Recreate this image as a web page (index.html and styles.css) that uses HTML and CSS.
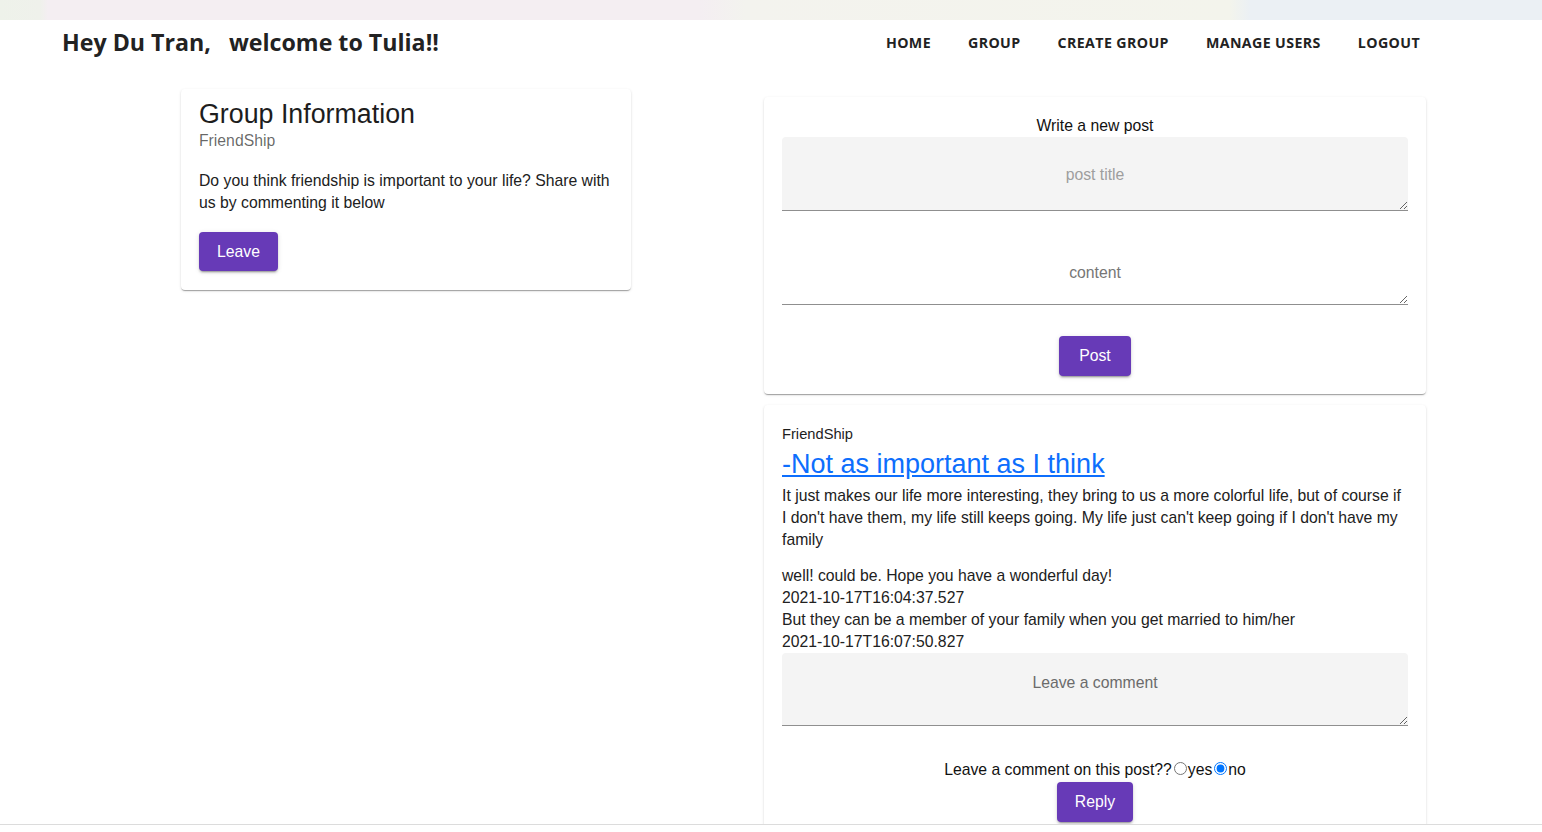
FILE: index.html
```html
<!DOCTYPE html>
<html lang="en">
<head>
<meta charset="utf-8">
<title>Tulia - Group</title>
<link rel="stylesheet" href="styles.css">
</head>
<body>
<div class="page">
  <div class="bgstrip"></div>
  <header class="topbar">
    <h1 class="greeting">Hey Du Tran,&nbsp;&nbsp; welcome to Tulia!!</h1>
    <nav class="nav">
      <a class="nav-link" href="#">HOME</a>
      <a class="nav-link" href="#">GROUP</a>
      <a class="nav-link" href="#">CREATE GROUP</a>
      <a class="nav-link" href="#">MANAGE USERS</a>
      <a class="nav-link" href="#">LOGOUT</a>
    </nav>
  </header>
  <main class="layout">
    <section class="col-left">
      <div class="card group-card">
        <h2 class="card-title">Group Information</h2>
        <div class="subtitle">FriendShip</div>
        <p class="desc">Do you think friendship is important to your life? Share with us by commenting it below</p>
        <button class="btn">Leave</button>
      </div>
    </section>
    <section class="col-right">
      <div class="card form-card">
        <div class="form-title">Write a new post</div>
        <textarea class="field filled title-field" placeholder="post title"></textarea>
        <textarea class="field standard content-field" placeholder="content"></textarea>
        <div class="center">
          <button class="btn btn-post">Post</button>
        </div>
      </div>
      <div class="card post-card">
        <div class="post-group">FriendShip</div>
        <a class="post-title" href="#">-Not as important as I think</a>
        <p class="post-body">It just makes our life more interesting, they bring to us a more colorful life, but of course if I don't have them, my life still keeps going. My life just can't keep going if I don't have my family</p>
        <div class="comments">
          <div class="comment-line">well! could be. Hope you have a wonderful day!</div>
          <div class="comment-line">2021-10-17T16:04:37.527</div>
          <div class="comment-line">But they can be a member of your family when you get married to him/her</div>
          <div class="comment-line">2021-10-17T16:07:50.827</div>
        </div>
        <textarea class="field filled comment-field" placeholder="Leave a comment"></textarea>
        <div class="center question">Leave a comment on this post??<input class="radio" type="radio" name="reply">yes<input class="radio" type="radio" name="reply" checked>no</div>
        <div class="center">
          <button class="btn">Reply</button>
        </div>
      </div>
    </section>
  </main>
</div>
</body>
</html>
```

FILE: styles.css
```css
* {
  box-sizing: border-box;
}

html, body {
  margin: 0;
  padding: 0;
  background: #ffffff;
}

body {
  font-family: "Liberation Sans", Arial, sans-serif;
  font-size: 15.75px;
  color: #212121;
}

.page {
  height: 825px;
  overflow: hidden;
  border-bottom: 1px solid #dcdcdc;
}

.bgstrip {
  height: 20px;
  background: linear-gradient(90deg,
    #eef2ea 0px, #eff1eb 40px, #f4eef2 48px,
    #f4eef2 700px, #f3f3ee 745px,
    #f3f4ec 1230px, #ebf0f4 1250px, #ebf0f4 1542px);
}

.topbar {
  height: 46px;
  display: flex;
  align-items: center;
  justify-content: space-between;
  padding: 0 122px 0 62px;
  background: #ffffff;
}

.greeting {
  margin: 0;
  font-family: "Open Sans", "Liberation Sans", sans-serif;
  font-weight: 700;
  font-size: 23.2px;
  color: #222;
  line-height: 1;
  white-space: pre;
}

.nav {
  display: flex;
  gap: 37px;
  align-items: center;
}

.nav-link {
  font-family: "Open Sans", "Liberation Sans", sans-serif;
  font-weight: 700;
  font-size: 14.2px;
  letter-spacing: 0.4px;
  color: #222;
  text-decoration: none;
  line-height: 1;
}

.layout {
  display: flex;
  align-items: flex-start;
  gap: 133px;
  padding-left: 181px;
}

.col-left {
  width: 450px;
  padding-top: 23px;
}

.col-right {
  width: 662px;
  padding-top: 31px;
  display: flex;
  flex-direction: column;
  gap: 11px;
}

.card {
  background: #fff;
  border-radius: 4px;
  box-shadow: 0 2px 1px -1px rgba(0,0,0,0.2), 0 1px 1px 0 rgba(0,0,0,0.14), 0 1px 3px 0 rgba(0,0,0,0.12);
}

.group-card {
  padding: 9px 18px 19px;
}

.card-title {
  margin: 0;
  font-weight: 400;
  font-size: 26.8px;
  line-height: 32px;
  color: #1d1d1d;
}

.subtitle {
  line-height: 22px;
  color: rgba(0,0,0,0.6);
}

.desc {
  margin: 18px 0 18px;
  line-height: 22px;
}

.btn {
  display: inline-flex;
  align-items: center;
  justify-content: center;
  height: 39px;
  min-width: 64px;
  padding: 0 18px;
  border: 0;
  border-radius: 4px;
  background: #673ab7;
  color: #fff;
  font-family: "Liberation Sans", Arial, sans-serif;
  font-size: 15.75px;
  box-shadow: 0 3px 1px -2px rgba(0,0,0,0.2), 0 2px 2px 0 rgba(0,0,0,0.14), 0 1px 5px 0 rgba(0,0,0,0.12);
  cursor: pointer;
}

.btn-post {
  min-width: 72px;
  height: 40px;
}

.form-card {
  padding: 18px 18px 18px;
}

.form-title {
  text-align: center;
  line-height: 22px;
  color: #111;
}

.center {
  display: flex;
  justify-content: center;
  align-items: center;
}

.field {
  display: block;
  width: 100%;
  height: 74px;
  border: 0;
  border-bottom: 1px solid #8f8f8f;
  font-family: "Liberation Sans", Arial, sans-serif;
  font-size: 15.75px;
  line-height: 22px;
  text-align: center;
  color: #222;
  outline: none;
  resize: vertical;
  padding: 27px 12px 8px;
}

.filled {
  background: #f4f4f4;
  border-radius: 4px 4px 0 0;
}

.standard {
  background: transparent;
}

.title-field::placeholder {
  color: #9e9e9e;
}

.content-field {
  margin-top: 20px;
  padding-top: 31px;
}

.content-field::placeholder {
  color: #767676;
}

.form-card .center {
  margin-top: 31px;
}

.post-card {
  padding: 19px 18px 18px;
}

.post-group {
  font-size: 14.7px;
  line-height: 20px;
  color: #1d1d1d;
}

.post-title {
  display: inline-block;
  margin-top: 4px;
  font-size: 27px;
  line-height: 32px;
  color: #0d6efd;
  text-decoration: underline;
  text-underline-offset: 2px;
}

.post-body {
  margin: 5px 0 14px;
  line-height: 22px;
}

.comment-line {
  line-height: 22px;
}

.comment-field {
  height: 73px;
  margin-top: 0;
  padding-top: 19px;
}

.comment-field::placeholder {
  color: #6b6b6b;
}

.question {
  margin-top: 33px;
  line-height: 22px;
  color: #111;
}

.radio {
  margin: 0 1px 0 2px;
  width: 13px;
  height: 13px;
  position: relative;
  top: -2px;
}

.question + .center {
  margin-top: 1px;
}

.post-card .btn {
  height: 40px;
}
```
